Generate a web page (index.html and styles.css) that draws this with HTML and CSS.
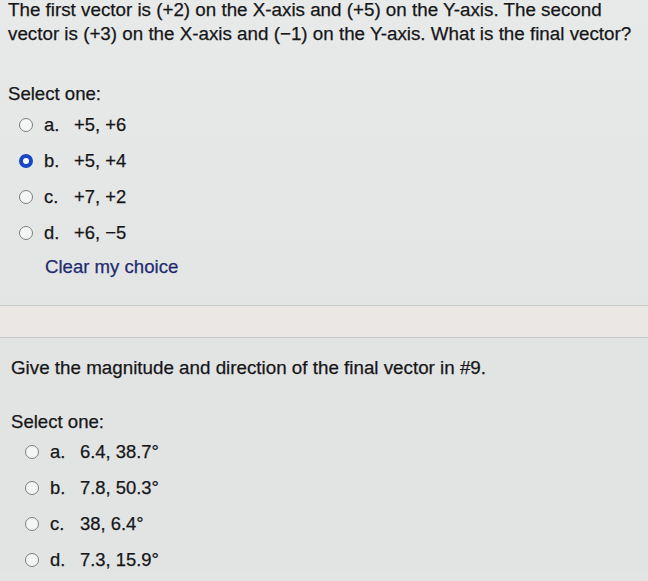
FILE: index.html
```html
<!DOCTYPE html>
<html>
<head>
<meta charset="utf-8">
<link rel="stylesheet" href="styles.css">
</head>
<body>
<div class="page">
  <section class="q q1">
    <p class="qtext">The first vector is (+2) on the X-axis and (+5) on the Y-axis. The second<br>vector is (+3) on the X-axis and (&minus;1) on the Y-axis. What is the final vector?</p>
    <div class="prompt">Select one:</div>
    <ul class="opts">
      <li class="opt"><span class="radio"></span><span class="let">a.</span><span class="val">+5, +6</span></li>
      <li class="opt"><span class="radio on"></span><span class="let">b.</span><span class="val">+5, +4</span></li>
      <li class="opt"><span class="radio"></span><span class="let">c.</span><span class="val">+7, +2</span></li>
      <li class="opt"><span class="radio"></span><span class="let">d.</span><span class="val">+6, &minus;5</span></li>
    </ul>
    <a class="clear">Clear my choice</a>
  </section>
  <div class="band"></div>
  <section class="q q2">
    <p class="qtext">Give the magnitude and direction of the final vector in #9.</p>
    <div class="prompt">Select one:</div>
    <ul class="opts">
      <li class="opt"><span class="radio"></span><span class="let">a.</span><span class="val">6.4, 38.7&deg;</span></li>
      <li class="opt"><span class="radio"></span><span class="let">b.</span><span class="val">7.8, 50.3&deg;</span></li>
      <li class="opt"><span class="radio"></span><span class="let">c.</span><span class="val">38, 6.4&deg;</span></li>
      <li class="opt"><span class="radio"></span><span class="let">d.</span><span class="val">7.3, 15.9&deg;</span></li>
    </ul>
  </section>
</div>
</body>
</html>
```
FILE: styles.css
```css
html, body {
  margin: 0;
  padding: 0;
}
body {
  background: #e3e5e5;
  font-family: "Liberation Sans", Arial, sans-serif;
  color: #161618;
  width: 648px;
  height: 581px;
  overflow: hidden;
  -webkit-text-stroke: 0.25px currentColor;
}
.page {
  display: flex;
  flex-direction: column;
}
.q1 {
  padding: 0 8px;
  background: linear-gradient(180deg, #e8eaea, #e3e5e5);
  padding-bottom: 27px;
}
.qtext {
  margin: 0;
  font-size: 18.8px;
  line-height: 24px;
  white-space: nowrap;
}
.q1 .qtext {
  margin-top: -2px;
}
.prompt {
  font-size: 18.6px;
  margin-top: 37px;
}
.opts {
  list-style: none;
  margin: 9px 0 0 0;
  padding: 0 0 0 11px;
  display: flex;
  flex-direction: column;
  gap: 14px;
}
.opt {
  display: flex;
  align-items: center;
  font-size: 18.4px;
  height: 22px;
}
.radio {
  width: 12px;
  height: 12px;
  border-radius: 50%;
  border: 1.5px solid #7a7e80;
  background: #f4f5f5;
  margin-right: 11px;
  flex: none;
}
.radio.on {
  border: 4.5px solid #1747c4;
  width: 6px;
  height: 6px;
  background: #ffffff;
}
.let {
  width: 30px;
}
.clear {
  display: block;
  margin: 12px 0 0 37px;
  font-size: 18.6px;
  color: #1f2b6e;
}
.band {
  height: 31px;
  border-top: 1px solid #c8caca;
  border-bottom: 1px solid #c8caca;
  background: #ebe7e5;
}
.q2 {
  padding: 0 11px;
  background: #e2e4e4;
  flex: 1;
}
.q2 .qtext {
  margin-top: 18px;
}
.q2 .prompt {
  margin-top: 31px;
}
.q2 .opts {
  padding-left: 14px;
  margin-top: 8px;
}
```
